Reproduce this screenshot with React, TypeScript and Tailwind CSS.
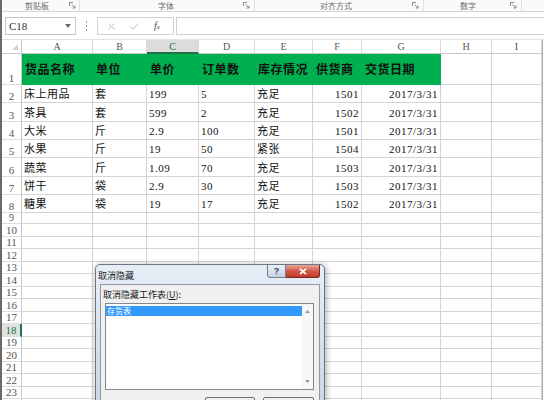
import React from "react";

const COLW = [
  "w-[71px]",
  "w-[54px]",
  "w-[52px]",
  "w-[56px]",
  "w-[58px]",
  "w-[49px]",
  "w-[79px]",
  "w-[51px]",
  "w-[50px]",
];
const LETTERS = ["A", "B", "C", "D", "E", "F", "G", "H", "I"];

const HEAD = ["货品名称", "单位", "单价", "订单数", "库存情况", "供货商", "交货日期"];
const DATA = [
  ["床上用品", "套", "199", "5", "充足", "1501", "2017/3/31"],
  ["茶具", "套", "599", "2", "充足", "1502", "2017/3/31"],
  ["大米", "斤", "2.9", "100", "充足", "1501", "2017/3/31"],
  ["水果", "斤", "19", "50", "紧张", "1504", "2017/3/31"],
  ["蔬菜", "斤", "1.09", "70", "充足", "1503", "2017/3/31"],
  ["饼干", "袋", "2.9", "30", "充足", "1503", "2017/3/31"],
  ["糖果", "袋", "19", "17", "充足", "1502", "2017/3/31"],
];
const DATA_H = ["h-[18px]", "h-[19px]", "h-[18px]", "h-[18px]", "h-[19px]", "h-[18px]", "h-[18px]"];
const EMPTY_H = [
  "h-[13px]",
  "h-[12px]",
  "h-[13px]",
  "h-[12px]",
  "h-[13px]",
  "h-[12px]",
  "h-[13px]",
  "h-[12px]",
  "h-[13px]",
  "h-[12px]",
  "h-[13px]",
  "h-[12px]",
  "h-[13px]",
  "h-[12px]",
  "h-[13px]",
];

const FONT = "font-['Liberation_Serif','Noto_Sans_CJK_SC',sans-serif]";
const UI = "font-['Noto_Sans_CJK_SC','Liberation_Sans',sans-serif]";

function Launcher() {
  return (
    <svg width="7" height="7" viewBox="0 0 7 7" className="shrink-0">
      <path d="M0.5 4 V0.5 H4" fill="none" stroke="#8a8a8a" strokeWidth="1" />
      <path d="M2.5 2.5 L6 6 M6 3.5 V6 H3.5" fill="none" stroke="#8a8a8a" strokeWidth="1" />
    </svg>
  );
}

function RowHead({ n, h, active, small }: { n?: number; h: string; active?: boolean; small?: boolean }) {
  return (
    <div
      className={`${h} w-[20px] shrink-0 flex items-end justify-center overflow-hidden border-b border-[#dcdcdc] ${
        active ? "bg-[#e2e2e2] border-r-2 border-r-[#217346] text-[#217346]" : "border-r border-r-[#c8c8c8] text-[#555]"
      } ${small ? "text-[10px] leading-[10px]" : "text-[11px] leading-[12px]"} ${FONT}`}
    >
      {n}
    </div>
  );
}

export default function App() {
  return (
    <div className="relative w-[544px] h-[400px] overflow-hidden bg-white border-l-2 border-[#6a6a6a] select-none">
      {/* ribbon group labels */}
      <div className={`flex h-[12px] border-b border-[#d6d6d6] bg-[#fafafa] text-[8px] text-[#6a6a6a] ${UI}`}>
        <div className="flex w-[78px] items-center pl-[23px] pr-[3px] border-r border-[#e0e0e0]">
          <span className="leading-[11px]">剪贴板</span>
          <span className="ml-auto"><Launcher /></span>
        </div>
        <div className="flex w-[175px] items-center pl-[78px] pr-[4px] border-r border-[#e0e0e0]">
          <span className="leading-[11px]">字体</span>
          <span className="ml-auto"><Launcher /></span>
        </div>
        <div className="flex w-[169px] items-center pl-[65px] pr-[4px] border-r border-[#e0e0e0]">
          <span className="leading-[11px]">对齐方式</span>
          <span className="ml-auto"><Launcher /></span>
        </div>
        <div className="flex w-[98px] items-center pl-[36px] pr-[4px] border-r border-[#e0e0e0]">
          <span className="leading-[11px]">数字</span>
          <span className="ml-auto"><Launcher /></span>
        </div>
        <div className="flex-1" />
      </div>

      {/* formula bar */}
      <div className="flex h-[28px] items-start pt-[5px] border-b border-[#e3e3e3]">
        <div className="ml-[3px] flex h-[18px] w-[71px] items-center border border-[#c6c6c6] bg-white pl-[3px] pr-[4px]">
          <span className={`text-[11px] leading-[12px] text-[#333] ${FONT}`}>C18</span>
          <svg width="6" height="4" viewBox="0 0 6 4" className="ml-auto">
            <path d="M0 0 H6 L3 4 Z" fill="#6a6a6a" />
          </svg>
        </div>
        <div className="flex w-[21px] h-[18px] flex-col items-center justify-center gap-[2px]">
          <span className="block w-[1px] h-[2px] bg-[#9a9a9a]" />
          <span className="block w-[1px] h-[2px] bg-[#9a9a9a]" />
          <span className="block w-[1px] h-[2px] bg-[#9a9a9a]" />
        </div>
        <div className="flex h-[18px] w-[77px] items-center border border-[#d2d2d2] bg-white">
          <svg width="7" height="7" viewBox="0 0 7 7" className="ml-[10px]">
            <path d="M0.5 0.5 L6.5 6.5 M6.5 0.5 L0.5 6.5" stroke="#bdbdbd" strokeWidth="1" />
          </svg>
          <svg width="9" height="7" viewBox="0 0 9 7" className="ml-[15px]">
            <path d="M0.5 3.5 L3 6 L8.5 0.5" fill="none" stroke="#bdbdbd" strokeWidth="1" />
          </svg>
          <span className={`ml-[15px] italic text-[10px] leading-[10px] text-[#444] font-['Liberation_Serif',serif]`}>
            f<span className="text-[7px]">x</span>
          </span>
        </div>
        <div className="ml-[2px] h-[18px] flex-1 border-y border-l border-[#d2d2d2] bg-white" />
      </div>

      {/* column header row */}
      <div className="flex h-[14px]">
        <div className="relative w-[20px] shrink-0 border-r border-b border-[#c8c8c8] bg-white">
          <svg width="6" height="6" viewBox="0 0 6 6" className="absolute right-[3px] bottom-[3px]">
            <path d="M6 0 V6 H0 Z" fill="#d4d4d4" />
          </svg>
        </div>
        {LETTERS.map((l, i) => (
          <div
            key={l}
            className={`${COLW[i]} shrink-0 flex items-center justify-center border-r border-[#d8d8d8] text-[10px] leading-[11px] ${FONT} ${
              i === 2
                ? "bg-[#dcdcdc] text-[#217346] border-b-2 border-b-[#217346]"
                : "bg-white text-[#555] border-b border-b-[#c8c8c8]"
            }`}
          >
            {l}
          </div>
        ))}
        <div className="w-[1px] shrink-0 bg-[#a8a8a8]" />
      </div>

      {/* row 1 header */}
      <div className="flex">
        <RowHead n={1} h="h-[31px]" />
        {COLW.map((w, i) => (
          <div
            key={i}
            className={`${w} h-[31px] shrink-0 flex items-center pl-[3px] ${
              i < 7 ? "bg-[#00b050] border-b border-[#00b050]" : "border-r border-b border-[#d4d4d4]"
            }`}
          >
            {i < 7 && (
              <span className={`text-[12px] font-bold leading-[14px] text-[#111] tracking-[0.5px] ${UI}`}>{HEAD[i]}</span>
            )}
          </div>
        ))}
        <div className="w-[1px] shrink-0 bg-[#a8a8a8]" />
      </div>

      {/* data rows */}
      {DATA.map((row, r) => (
        <div key={r} className="flex">
          <RowHead n={r + 2} h={DATA_H[r]} />
          {COLW.map((w, i) => (
            <div
              key={i}
              className={`${w} ${DATA_H[r]} shrink-0 flex items-end pb-[1px] border-r border-b border-[#d4d4d4] ${
                i === 5 || i === 6 ? "justify-end pr-[2px]" : "pl-[2px]"
              }`}
            >
              {i < 7 && (
                <span className={`text-[11px] leading-[13px] tracking-[0.5px] text-[#111] ${FONT}`}>{row[i]}</span>
              )}
            </div>
          ))}
          <div className="w-[1px] shrink-0 bg-[#a8a8a8]" />
        </div>
      ))}

      {/* row 9 */}
      <div className="flex">
        <RowHead n={9} h="h-[11px]" small />
        {COLW.map((w, i) => (
          <div key={i} className={`${w} h-[11px] shrink-0 border-r border-b border-[#d4d4d4]`} />
        ))}
        <div className="w-[1px] shrink-0 bg-[#a8a8a8]" />
      </div>

      {/* empty rows */}
      {EMPTY_H.map((h, r) => (
        <div key={r} className="flex">
          <RowHead n={r + 10 <= 23 ? r + 10 : undefined} h={h} active={r + 10 === 18} />
          {COLW.map((w, i) => (
            <div key={i} className={`${w} ${h} shrink-0 border-r border-b border-[#d4d4d4]`} />
          ))}
          <div className="w-[1px] shrink-0 bg-[#a8a8a8]" />
        </div>
      ))}

      {/* dialog */}
      <div className="absolute left-[93px] top-[264px] w-[230px] h-[150px] rounded-t-[5px] border border-[#6b7788] bg-gradient-to-b from-[#e8eef6] via-[#d6e1ee] to-[#c6d5e7] shadow-[1px_1px_6px_rgba(0,0,0,0.35)]">
        <div className="flex h-[19px] items-start">
          <span className={`pl-[2px] pt-[5px] text-[9px] leading-[11px] text-[#1a1a1a] ${UI}`}>取消隐藏</span>
          <div className="ml-auto mr-[4px] flex">
            <div className="flex h-[13px] w-[19px] items-center justify-center rounded-bl-[3px] border border-t-0 border-[#6f7f94] bg-gradient-to-b from-[#eef3f9] to-[#c3d0e0]">
              <span className="text-[9px] leading-[9px] font-bold text-[#2d3f58] font-['Liberation_Sans',sans-serif]">?</span>
            </div>
            <div className="flex h-[13px] w-[34px] items-center justify-center rounded-br-[3px] border border-l-0 border-t-0 border-[#7a2a20] bg-gradient-to-b from-[#e7a79b] via-[#d0584a] to-[#c13a2b]">
              <svg width="8" height="7" viewBox="0 0 8 7">
                <path d="M1 0.8 L7 6.2 M7 0.8 L1 6.2" stroke="#ffffff" strokeWidth="1.8" />
              </svg>
            </div>
          </div>
        </div>
        <div className="mx-[4px] h-[140px] border border-[#8d9aab] bg-[#f0f0f0]">
          <div className={`pl-[2px] pt-[4px] h-[18px] text-[9px] leading-[11px] text-[#1a1a1a] ${UI}`}>
            取消隐藏工作表(<span className="underline">U</span>):
          </div>
          <div className="ml-[4px] flex h-[87px] w-[209px] border border-[#828790] bg-white">
            <div className="flex-1 pt-[2px]">
              <div className={`h-[10px] bg-[#3399ff] pl-[1px] text-[8px] leading-[10px] text-white ${UI}`}>存货表</div>
            </div>
            <div className="flex w-[11px] flex-col items-center justify-between bg-[#f7f7f7] py-[6px]">
              <svg width="5" height="3" viewBox="0 0 5 3">
                <path d="M0 3 L2.5 0 L5 3 Z" fill="#9a9a9a" />
              </svg>
              <svg width="5" height="3" viewBox="0 0 5 3">
                <path d="M0 0 L5 0 L2.5 3 Z" fill="#9a9a9a" />
              </svg>
            </div>
          </div>
          <div className="mt-[7px] flex">
            <div className="ml-[104px] h-[20px] w-[50px] rounded-[2px] border border-[#707070] bg-gradient-to-b from-[#f2f2f2] to-[#dcdcdc]" />
            <div className="ml-[8px] h-[20px] w-[51px] rounded-[2px] border border-[#707070] bg-gradient-to-b from-[#f2f2f2] to-[#dcdcdc]" />
          </div>
        </div>
      </div>
    </div>
  );
}
